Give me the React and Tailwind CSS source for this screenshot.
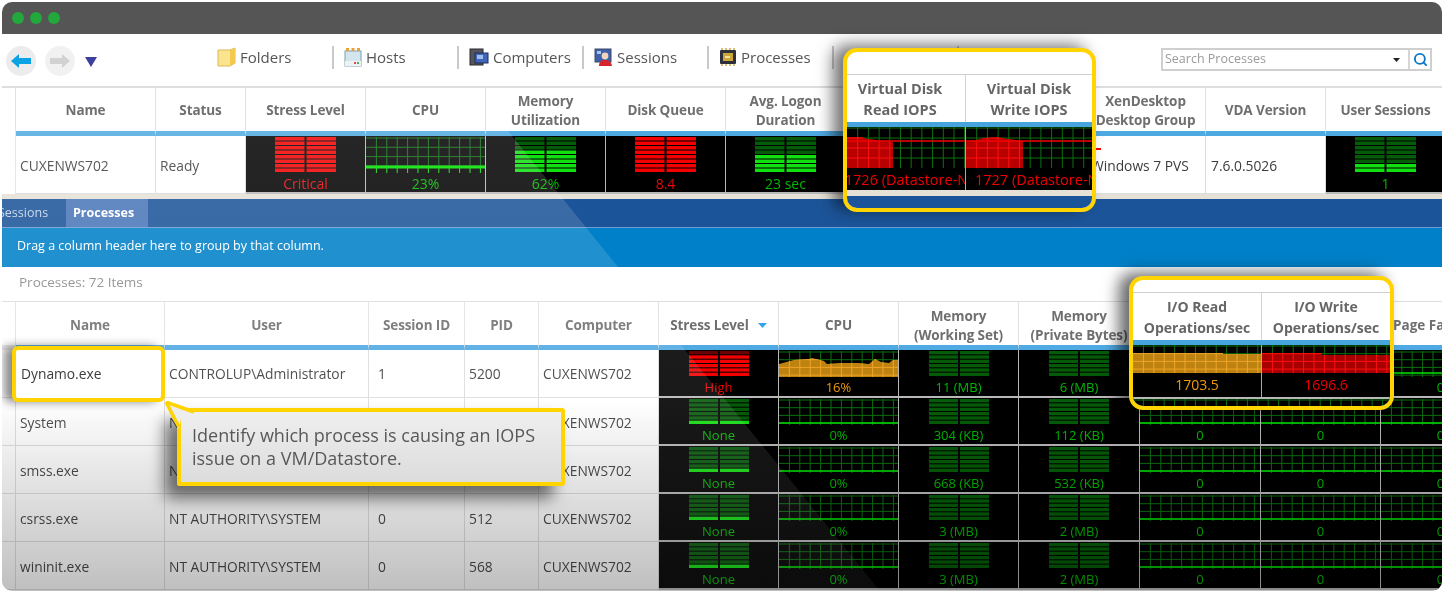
import { Search } from 'lucide-react';

const TOP_COLS = 'grid-cols-[14px_140px_90px_120px_120px_120px_120px_120px_120px_120px_120px_120px_120px]';
const BOTTOM_COLS = 'grid-cols-[14px_149px_204px_96px_74px_120px_120px_120px_120px_121px_121px_120px_120px]';

const LED = {
  green: { on: '#10e010', off: '#045c08', text: 'text-[#00b800]' },
  red: { on: '#f40000', off: '#6a0000', text: 'text-[#e80808]' },
  orange: { text: 'text-[#ee9a0c]' },
};

function LedBars({ rows, lit, color, width, height }) {
  const step = height / rows;
  const half = width / 2;
  const items = [];
  for (let i = 0; i < rows; i++) {
    const on = rows - i <= lit;
    const fill = on ? LED[color].on : LED[color].off;
    const y = i * step;
    items.push(<rect key={`l${i}`} x={0} y={y} width={half - 1} height={step - 1} fill={fill} />);
    items.push(<rect key={`r${i}`} x={half + 1} y={y} width={half - 1} height={step - 1} fill={fill} />);
  }
  return <svg width={width} height={height} className="block">{items}</svg>;
}

function Graph({ id, w, h, dx = 10.4, dy = 8, baseY, baseW = 1.5, area, fill, hi, line = '#0c7010', base = '#00e000', trace }) {
  const xs = [];
  const ys = [];
  for (let x = dx; x < w; x += dx) xs.push(x);
  for (let y = 1; y < h; y += dy) ys.push(y);
  const lines = (stroke) => (
    <>
      {xs.map(x => <line key={`x${x}`} x1={x} x2={x} y1={0} y2={h} stroke={stroke} strokeWidth="1" />)}
      {ys.map(y => <line key={`y${y}`} x1={0} x2={w} y1={y} y2={y} stroke={stroke} strokeWidth="1" />)}
    </>
  );
  return (
    <svg width={w} height={h} className="block">
      {lines(line)}
      {area && (
        <>
          <clipPath id={id}><polygon points={area} /></clipPath>
          <polygon points={area} fill={fill} />
          <g clipPath={`url(#${id})`}>{lines(hi)}</g>
        </>
      )}
      {baseY != null && <line x1={0} x2={w} y1={baseY} y2={baseY} stroke={base} strokeWidth={baseW} />}
      {trace && <polyline points={trace} fill="none" stroke={base} strokeWidth="1.5" />}
    </svg>
  );
}

function MetricCell({ children, label, color = 'green', h, textPos }) {
  return (
    <div className={`${h} bg-black border-r border-b-2 border-[#b8b8b8] overflow-hidden flex flex-col items-center`}>
      {children}
      <span className={`${LED[color].text} ${textPos} leading-none whitespace-nowrap`}>{label}</span>
    </div>
  );
}

function TopBar({ rows = 8, lit, color = 'green', label }) {
  return (
    <MetricCell label={label} color={color} h="h-[58px]" textPos="mt-[4px] text-[14px]">
      <div className="mt-[1px]"><LedBars rows={rows} lit={lit} color={color} width={61} height={36} /></div>
    </MetricCell>
  );
}

function RowBar({ lit, color = 'green', label }) {
  return (
    <MetricCell label={label} color={color} h="h-[48px]" textPos="mt-[4px] text-[13px]">
      <div className="mt-[1px]"><LedBars rows={6} lit={lit} color={color} width={60} height={26} /></div>
    </MetricCell>
  );
}

function RowGraph({ id, w = 120, label, color = 'green', baseY = 24, ...rest }) {
  return (
    <MetricCell label={label} color={color} h="h-[48px]" textPos="mt-[4px] text-[13px]">
      <div className="mt-[1px]"><Graph id={id} w={w} h={26} baseY={baseY} {...rest} /></div>
    </MetricCell>
  );
}

function HeaderCell({ children, pt = 'pt-[2px]' }) {
  return (
    <div className={`h-[48px] ${pt} border-r border-r-[#e2e2e2] border-b-[5px] border-b-[#4fa9e2] flex items-center justify-center text-center px-[2px] font-bold tracking-[-0.1px] text-[13.5px] leading-[19px] text-[#6f6f6f] whitespace-nowrap`}>
      <div>{children}</div>
    </div>
  );
}

function TextCell({ children, h = 'h-[48px]', pad = 'pl-[4px] pt-[4px]' }) {
  return (
    <div className={`${h} ${pad} border-r border-b border-[#dcdcdc] flex items-center text-[13.8px] text-[#3c3c3c] whitespace-nowrap overflow-hidden`}>
      {children}
    </div>
  );
}

function FolderIcon() {
  return (
    <svg width="19" height="20" viewBox="0 0 19 20">
      <path d="M1 3h12l5-2v15l-5 3H1z" fill="#fbe48e" stroke="#d9b95a" />
      <path d="M13 3l5-2v15l-5 3z" fill="#f4c94d" />
    </svg>
  );
}

function HostsIcon() {
  return (
    <svg width="18" height="20" viewBox="0 0 18 20">
      <rect x="1" y="4" width="16" height="15" fill="#d3e6ee" stroke="#7ba2b4" />
      <rect x="1" y="14" width="16" height="5" fill="#eef2f2" />
      <rect x="2" y="1" width="3" height="3" fill="#e8a13c" />
      <rect x="7.5" y="1" width="3" height="3" fill="#e8a13c" />
      <rect x="13" y="1" width="3" height="3" fill="#e8a13c" />
      <rect x="10" y="15" width="2" height="2" fill="#e05050" />
      <rect x="13" y="15" width="2" height="2" fill="#50b060" />
    </svg>
  );
}

function ComputersIcon() {
  return (
    <svg width="20" height="20" viewBox="0 0 20 20">
      <rect x="1" y="2" width="13" height="16" fill="#55565c" stroke="#2b2b30" />
      <rect x="6" y="6" width="13" height="10" fill="#3f66b8" stroke="#1e2a58" />
      <rect x="8" y="8" width="6" height="4" fill="#9fc0ee" />
    </svg>
  );
}

function SessionsIcon() {
  return (
    <svg width="19" height="20" viewBox="0 0 19 20">
      <rect x="1" y="2" width="16" height="13" fill="#3f5fa8" stroke="#404a6a" />
      <circle cx="11" cy="9" r="3.4" fill="#f2d3bd" />
      <path d="M5 19c0-5 3-6 6-6s6 1 7 6z" fill="#d6242c" />
      <rect x="3" y="4" width="4" height="3" fill="#a8c4ee" />
    </svg>
  );
}

function ProcessesIcon() {
  return (
    <svg width="18" height="18" viewBox="0 0 18 18">
      <rect x="1" y="2" width="16" height="14" rx="1" fill="#2d2f3a" />
      <rect x="4" y="5" width="10" height="8" fill="#c9a53a" />
      <rect x="6" y="8" width="5" height="2" fill="#f3e29a" />
      <path d="M3 0v2M7 0v2M11 0v2M15 0v2M3 16v2M7 16v2M11 16v2M15 16v2" stroke="#c9a53a" strokeWidth="1.4" />
    </svg>
  );
}

const TOOLS = [
  { label: 'Folders', icon: <FolderIcon /> },
  { label: 'Hosts', icon: <HostsIcon /> },
  { label: 'Computers', icon: <ComputersIcon /> },
  { label: 'Sessions', icon: <SessionsIcon /> },
  { label: 'Processes', icon: <ProcessesIcon /> },
  { label: '', icon: null },
];

function Toolbar() {
  return (
    <div className="h-[54px] border-b-2 border-[#dedede] flex items-center relative">
      <div className="w-[205px] flex items-center pl-[4px] shrink-0 mt-[2px]">
        <div className="w-[30px] h-[30px] rounded-full bg-[#ececec] flex items-center justify-center">
          <svg width="22" height="16" viewBox="0 0 22 16"><path d="M1 8l8-7v4h12v6H9v4z" fill="#0ba3e4" /></svg>
        </div>
        <div className="ml-[9px] w-[30px] h-[30px] rounded-full bg-[#f1f1f1] flex items-center justify-center">
          <svg width="22" height="16" viewBox="0 0 22 16"><path d="M21 8l-8-7v4H1v6h12v4z" fill="#d2d2d2" /></svg>
        </div>
        <svg className="ml-[10px] mt-[2px]" width="12" height="10" viewBox="0 0 12 10"><path d="M0 0h12L6 10z" fill="#3c3f9c" /></svg>
      </div>
      {TOOLS.map((t, i) => (
        <div key={i} className={`w-[125px] h-[23px] -mt-[6px] shrink-0 flex items-center gap-[4px] pl-[10px] text-[15px] text-[#555] ${i > 0 ? 'border-l-2 border-[#c9c9c9]' : ''}`}>
          {t.icon}
          <span>{t.label}</span>
        </div>
      ))}
      <div className="w-[0] h-[23px] -mt-[6px] border-l-2 border-[#c9c9c9]" />
      <div className="absolute left-[1159px] top-[14px] w-[271px] h-[23px] border-2 border-[#cfcfcf] flex items-center">
        <span className="pl-[2px] flex-1 text-[12.5px] text-[#9a9a9a]">Search Processes</span>
        <svg className="mr-[8px]" width="7" height="4" viewBox="0 0 7 4"><path d="M0 0h7L3.5 4z" fill="#222" /></svg>
        <div className="w-[22px] h-full border-l-2 border-[#d6d6d6] flex items-center justify-center">
          <Search size={15} strokeWidth={3} className="text-[#0a78c4]" />
        </div>
      </div>
    </div>
  );
}

function TopTable() {
  return (
    <div>
      <div className={`grid ${TOP_COLS}`}>
        <div className="h-[48px] border-r border-[#e2e2e2]" />
        <HeaderCell>Name</HeaderCell>
        <HeaderCell>Status</HeaderCell>
        <HeaderCell>Stress Level</HeaderCell>
        <HeaderCell>CPU</HeaderCell>
        <HeaderCell>Memory<br />Utilization</HeaderCell>
        <HeaderCell>Disk Queue</HeaderCell>
        <HeaderCell>Avg. Logon<br />Duration</HeaderCell>
        <HeaderCell />
        <HeaderCell />
        <HeaderCell>XenDesktop<br />Desktop Group</HeaderCell>
        <HeaderCell>VDA Version</HeaderCell>
        <HeaderCell>User Sessions</HeaderCell>
      </div>
      <div className={`grid ${TOP_COLS}`}>
        <div className="h-[58px] border-r border-[#e2e2e2]" />
        <TextCell h="h-[58px]">CUXENWS702</TextCell>
        <TextCell h="h-[58px]">Ready</TextCell>
        <TopBar lit={8} color="red" label="Critical" />
        <MetricCell label="23%" h="h-[58px]" textPos="mt-[4px] text-[14px]">
          <div className="mt-[1px]">
            <Graph id="top-cpu" w={120} h={36} dy={9.3} baseY={30} baseW={3} area="0,30 120,30 120,36 0,36" fill="#000000" hi="#12e012" />
          </div>
        </MetricCell>
        <TopBar lit={5} label="62%" />
        <TopBar lit={8} color="red" label="8.4" />
        <TopBar lit={4} label="23 sec" />
        <div className="h-[58px] bg-black" />
        <div className="h-[58px] bg-black" />
        <TextCell h="h-[58px]" pad="pl-[5px] pt-[4px]">Windows 7 PVS</TextCell>
        <TextCell h="h-[58px]" pad="pl-[5px] pt-[4px]">7.6.0.5026</TextCell>
        <TopBar lit={2} label="1" />
      </div>
    </div>
  );
}

function TabBand() {
  return (
    <>
      <div className="h-[5px] bg-[#e5e1d6]" />
      <div className="h-[29px] bg-[#1c5499] border-b border-[#6f9bd0] flex items-center text-[12.5px] overflow-hidden">
        <span className="w-[68px] -ml-[4px] text-[#c4d4ea] shrink-0">Sessions</span>
        <span className="w-[82px] h-full bg-[#4a76b8] flex items-center pl-[7px] font-bold text-white">Processes</span>
      </div>
      <div className="h-[39px] pb-[2px] bg-[#0080c8] flex items-center pl-[15px] text-[12.5px] text-white">
        Drag a column header here to group by that column.
      </div>
      <div className="h-[35px] pb-[4px] flex items-center pl-[17px] text-[13.5px] text-[#8a8a8a] border-b border-[#dedede]">
        Processes: 72 Items
      </div>
    </>
  );
}

const CPU_AREA = '0,13 15,9 30,8 33,7 45,10 48,13 60,12 80,12 90,13 96,8 102,11 110,12 114,9 120,9 120,26 0,26';

const PROCESSES = [
  { name: 'System', user: 'NT AUTHORITY\\SYSTEM', sid: '0', pid: '4', ws: '304 (KB)', pb: '112 (KB)' },
  { name: 'smss.exe', user: 'NT AUTHORITY\\SYSTEM', sid: '0', pid: '340', ws: '668 (KB)', pb: '532 (KB)' },
  { name: 'csrss.exe', user: 'NT AUTHORITY\\SYSTEM', sid: '0', pid: '512', ws: '3 (MB)', pb: '2 (MB)' },
  { name: 'wininit.exe', user: 'NT AUTHORITY\\SYSTEM', sid: '0', pid: '568', ws: '3 (MB)', pb: '2 (MB)' },
];

function BottomTable() {
  const pt = 'pt-[4px]';
  return (
    <div>
      <div className={`grid ${BOTTOM_COLS}`}>
        <div className="h-[48px] border-r border-b-[5px] border-r-[#e2e2e2] border-b-[#e8e8e8]" />
        <HeaderCell pt={pt}>Name</HeaderCell>
        <HeaderCell pt={pt}>User</HeaderCell>
        <HeaderCell pt={pt}>Session ID</HeaderCell>
        <HeaderCell pt={pt}>PID</HeaderCell>
        <HeaderCell pt={pt}>Computer</HeaderCell>
        <HeaderCell pt={pt}>
          <span className="inline-flex items-center gap-[9px]">Stress Level
            <svg width="9" height="5" viewBox="0 0 9 5"><path d="M0 0h9L4.5 5z" fill="#36a3e6" /></svg>
          </span>
        </HeaderCell>
        <HeaderCell pt={pt}>CPU</HeaderCell>
        <HeaderCell pt={pt}>Memory<br />(Working Set)</HeaderCell>
        <HeaderCell pt={pt}>Memory<br />(Private Bytes)</HeaderCell>
        <HeaderCell />
        <HeaderCell />
        <div className="h-[48px] pt-[4px] border-b-[5px] border-b-[#4fa9e2] flex items-center pl-[12px] font-bold text-[13.5px] text-[#6f6f6f] whitespace-nowrap">Page Faults</div>
      </div>

      <div className={`grid ${BOTTOM_COLS}`}>
        <div className="h-[48px] border-r border-b border-[#dcdcdc]" />
        <TextCell pad="pl-[4px] pt-[2px]">Dynamo.exe</TextCell>
        <TextCell pad="pl-[4px] pt-[2px]">CONTROLUP\Administrator</TextCell>
        <TextCell pad="pl-[9px] pt-[2px]">1</TextCell>
        <TextCell pad="pl-[4px] pt-[2px]">5200</TextCell>
        <TextCell pad="pl-[4px] pt-[2px]">CUXENWS702</TextCell>
        <RowBar lit={5} color="red" label="High" />
        <RowGraph id="dyn-cpu" label="16%" color="orange" baseY={null} dy={7.7} area={CPU_AREA} fill="#bd8210" hi="#f0a428" />
        <RowBar lit={0} label="11 (MB)" />
        <RowBar lit={0} label="6 (MB)" />
        <div className="h-[48px] bg-black" />
        <div className="h-[48px] bg-black" />
        <RowGraph id="dyn-pf" label="0" dy={7.7} baseY={22} />
      </div>

      {PROCESSES.map(p => (
        <div key={p.name} className={`grid ${BOTTOM_COLS}`}>
          <div className="h-[48px] border-r border-b border-[#dcdcdc]" />
          <TextCell>{p.name}</TextCell>
          <TextCell>{p.user}</TextCell>
          <TextCell pad="pl-[9px] pt-[4px]">{p.sid}</TextCell>
          <TextCell>{p.pid}</TextCell>
          <TextCell>CUXENWS702</TextCell>
          <RowBar lit={1} label="None" />
          <RowGraph id={`${p.name}-cpu`} label="0%" dy={7.7} />
          <RowBar lit={0} label={p.ws} />
          <RowBar lit={0} label={p.pb} />
          <RowGraph id={`${p.name}-r`} w={121} label="0" dy={7.7} />
          <RowGraph id={`${p.name}-w`} label="0" dy={7.7} />
          <RowGraph id={`${p.name}-pf`} label="0" dy={7.7} />
        </div>
      ))}
    </div>
  );
}

function DiskHighlight() {
  const cell = 'flex flex-col items-center overflow-hidden bg-black h-[63px]';
  const head = 'h-[47px] flex items-center justify-center text-center font-bold text-[14.5px] leading-[21px] text-[#666]';
  return (
    <div className="absolute left-[841px] top-[46px] w-[253px] h-[164px] border-[4px] border-[#ffd400] rounded-[14px] bg-white overflow-hidden shadow-[-10px_-3px_16px_rgba(0,0,0,0.55)]">
      <div className="h-[23px] border-b border-[#cfcfcf]" />
      <div className="grid grid-cols-[119px_126px] border-b-[5px] border-[#47a5de]">
        <div className={`${head} pr-[12px] border-r border-[#d4d4d4]`}><div>Virtual Disk<br />Read IOPS</div></div>
        <div className={head}><div>Virtual Disk<br />Write IOPS</div></div>
      </div>
      <div className="grid grid-cols-[119px_126px]">
        <div className={`${cell} border-r border-[#aaa]`}>
          <Graph id="vd-read" w={119} h={41} dx={10.7} dy={10} base="#f00000" trace="0,14 119,14" area="0,10 14,10 20,12 30,13 38,14 46,15 46,41 0,41" fill="#b80000" hi="#ff1010" />
          <span className="mt-[5px] ml-[1px] text-[14.5px] leading-none text-[#f00000] whitespace-nowrap">1726 (Datastore-N</span>
        </div>
        <div className={cell}>
          <Graph id="vd-write" w={126} h={41} dx={10.7} dy={10} base="#f00000" trace="0,14 126,14" area="0,15 10,13 18,11 30,10 42,12 57,14 57,41 0,41" fill="#b80000" hi="#ff1010" />
          <span className="mt-[5px] self-start pl-[9px] text-[14.5px] leading-none text-[#f00000] whitespace-nowrap">1727 (Datastore-N</span>
        </div>
      </div>
      <div className="h-[6px] bg-[#e5e1d6]" />
      <div className="h-[12px] bg-[#1c5499]" />
    </div>
  );
}

function IoHighlight() {
  const head = 'h-[47px] flex items-center justify-center text-center font-bold text-[14px] leading-[21px] text-[#666] whitespace-nowrap';
  return (
    <div className="absolute left-[1127px] top-[274px] w-[265px] h-[134px] border-[4px] border-[#ffd400] rounded-[14px] bg-white overflow-hidden shadow-[-10px_-3px_16px_rgba(0,0,0,0.6)]">
      <div className="h-[13px] border-b border-[#cfcfcf]" />
      <div className="grid grid-cols-[129px_128px] border-b-[5px] border-[#47a5de]">
        <div className={`${head} border-r border-[#d4d4d4]`}><div>I/O Read<br />Operations/sec</div></div>
        <div className={head}><div>I/O Write<br />Operations/sec</div></div>
      </div>
      <div className="grid grid-cols-[129px_128px] bg-black border-b-2 border-[#b8b8b8]">
        <div className="h-[52px] border-r border-[#aaa] flex flex-col items-center">
          <Graph id="io-read" w={128} h={28} dy={7.7} area="0,8 90,8 90,9 128,9 128,28 0,28" fill="#bd8210" hi="#f0a428" />
          <span className="mt-[5px] text-[14px] leading-none text-[#ee9a0c]">1703.5</span>
        </div>
        <div className="h-[52px] flex flex-col items-center">
          <Graph id="io-write" w={128} h={28} dy={7.7} area="0,8 60,8 60,10 128,10 128,28 0,28" fill="#a80000" hi="#ff1010" />
          <span className="mt-[5px] text-[14px] leading-none text-[#f00000]">1696.6</span>
        </div>
      </div>
      <div className="bg-black"><Graph id="io-below" w={257} h={8} dy={7.7} /></div>
    </div>
  );
}

function Callout() {
  return (
    <>
      <div className="absolute left-[175px] top-[406px] w-[388px] h-[78px] border-[4px] border-[#ffd400] rounded-[3px] bg-gradient-to-b from-[#efefef] to-[#dcdcdc] pl-[11px] pt-[12px] text-[18px] leading-[23px] text-[#585858] whitespace-nowrap shadow-[-12px_12px_16px_rgba(0,0,0,0.55)]">
        Identify which process is causing an IOPS<br />issue on a VM/Datastore.
      </div>
      <svg className="absolute left-[162px] top-[399px]" width="36" height="30" viewBox="0 0 36 30">
        <path d="M2 1L32 12H18L15 28z" fill="#ececec" stroke="none" />
        <path d="M2 1L30 11M2 1L15 26" stroke="#ffd400" strokeWidth="3.5" fill="none" />
      </svg>
    </>
  );
}

export default function App() {
  return (
    <div className="h-[594px] bg-white overflow-hidden" style={{ fontFamily: '"Open Sans", sans-serif' }}>
      <div className="relative ml-[2px] mt-[2px] w-[1440px] h-[589px] rounded-[10px] overflow-hidden blur-[0.45px]">
        <div className="h-[32px] bg-[#555555] flex items-center gap-[6px] pl-[10px]">
          <span className="w-[12px] h-[12px] rounded-full bg-[#22a83c]" />
          <span className="w-[12px] h-[12px] rounded-full bg-[#22a83c]" />
          <span className="w-[12px] h-[12px] rounded-full bg-[#22a83c]" />
        </div>
        <Toolbar />
        <TopTable />
        <TabBand />
        <BottomTable />

        {/* light diagonal sheen + bottom fade */}
        <div className="absolute left-0 top-[129px] w-[880px] h-[460px] bg-gradient-to-b from-white/15 to-white/6 [clip-path:polygon(0_0,506px_0,878px_460px,0_460px)] pointer-events-none" />
        <div className="absolute left-0 right-0 top-[398px] bottom-0 bg-gradient-to-b from-transparent to-black/25 pointer-events-none" />

        <DiskHighlight />
        <div className="absolute left-[1094px] top-[146px] w-[5px] h-[2px] bg-[#f00000]" />
        <IoHighlight />
        <div className="absolute left-[10px] top-[344px] w-[153px] h-[56px] border-[4px] border-[#ffd400] rounded-[6px] bg-white flex items-center pl-[5px] text-[13.8px] text-[#3c3c3c] shadow-[-8px_0_10px_rgba(0,0,0,0.45)]">
          Dynamo.exe
        </div>
        <Callout />
      </div>
    </div>
  );
}
